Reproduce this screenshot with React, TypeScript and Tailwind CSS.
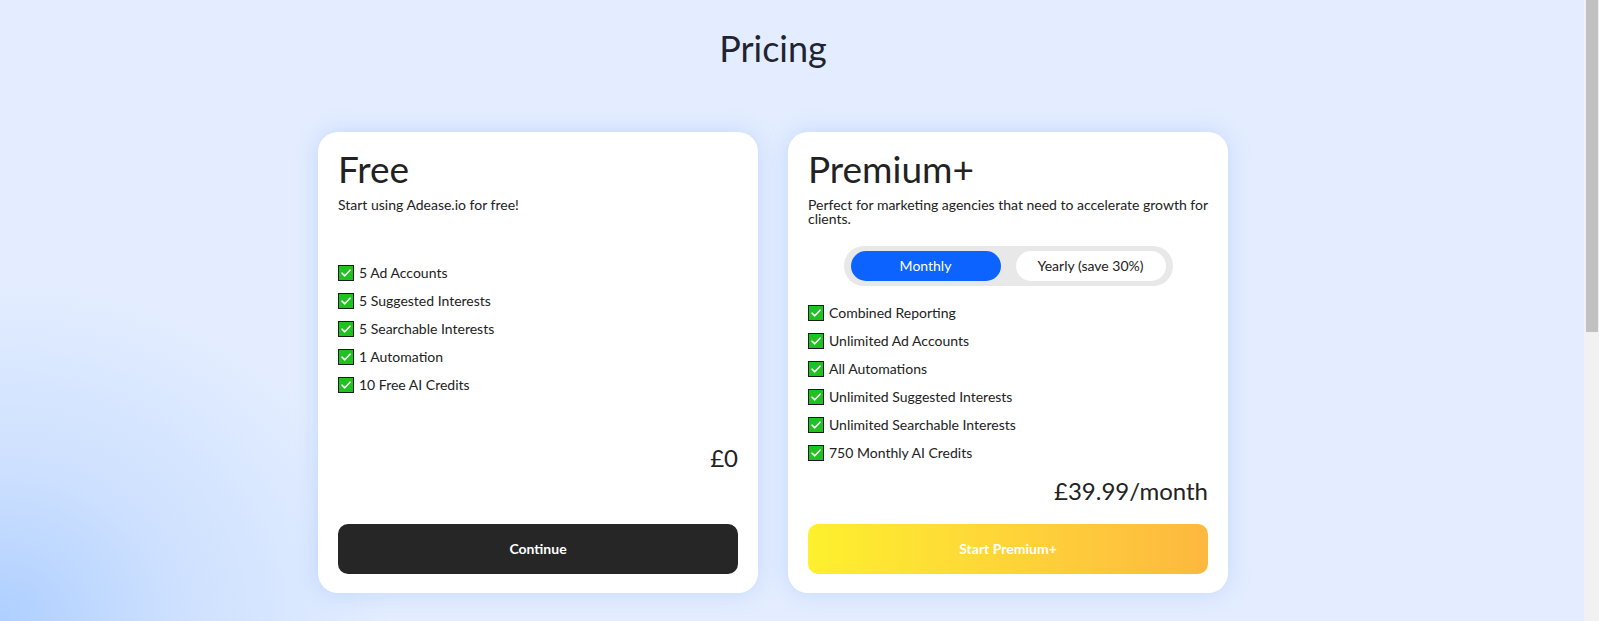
import React, { useState } from "react";

const freeFeatures = [
    "5 Ad Accounts",
    "5 Suggested Interests",
    "5 Searchable Interests",
    "1 Automation",
    "10 Free AI Credits",
];

const premiumFeatures = [
    "Combined Reporting",
    "Unlimited Ad Accounts",
    "All Automations",
    "Unlimited Suggested Interests",
    "Unlimited Searchable Interests",
    "750 Monthly AI Credits",
];

const CheckBox = () => (
    <svg width="16" height="16" viewBox="0 0 16 16" className="shrink-0">
        <rect x="0.5" y="0.5" width="15" height="15" fill="#1fc21f" stroke="#1b1b1b" />
        <path d="M4 8.2 L6.8 10.8 L12 5.2" fill="none" stroke="#ffffff" strokeWidth="1.6" strokeLinecap="round" strokeLinejoin="round" />
    </svg>
);

const FeatureList = ({ items }: { items: string[] }) => (
    <ul className="flex flex-col gap-2">
        {items.map((item) => (
            <li key={item} className="flex items-center gap-[5px] h-5 text-sm text-[#222]">
                <CheckBox />
                <span>{item}</span>
            </li>
        ))}
    </ul>
);

export default function App() {
    const [plan, setPlan] = useState<"monthly" | "yearly">("monthly");

    return (
        <div className="flex h-screen font-['Lato',sans-serif] text-[#222]">
            <div className="flex-1 bg-[#e3edff] bg-[radial-gradient(ellipse_390px_340px_at_0px_621px,#aecfff_0%,#cde0ff_45%,#e3edff_100%)] bg-no-repeat">
                <div className="flex flex-col items-center pr-[38px] pt-[27px]">
                    <h1 className="text-4xl leading-[43px] text-[#1f2430]">Pricing</h1>

                    <div className="mt-[62px] flex gap-[30px] items-stretch">
                        {/* free plan */}
                        <div className="w-[440px] bg-white rounded-[20px] px-5 pt-[17px] pb-[19px] flex flex-col shadow-[0_0_22px_rgba(110,160,255,0.28)]">
                            <h2 className="text-[37px] leading-[40px]">Free</h2>
                            <p className="mt-[9px] text-sm leading-[14px]">Start using Adease.io for free!</p>
                            <div className="mt-[51px]">
                                <FeatureList items={freeFeatures} />
                            </div>
                            <p className="mt-[47px] text-right text-2xl leading-8">£0</p>
                            <button
                                type="button"
                                className="mt-auto h-[50px] w-full rounded-[10px] bg-[#262626] text-white text-sm font-bold"
                            >
                                Continue
                            </button>
                        </div>

                        {/* premium plan */}
                        <div className="w-[440px] bg-white rounded-[20px] px-5 pt-[17px] pb-[19px] flex flex-col shadow-[0_0_22px_rgba(110,160,255,0.28)]">
                            <h2 className="text-[37px] leading-[40px]">Premium+</h2>
                            <p className="mt-[9px] text-sm leading-[14px]">
                                Perfect for marketing agencies that need to accelerate growth for clients.
                            </p>
                            <div className="mt-5 flex justify-center">
                                <div className="flex gap-[15px] rounded-full bg-[#e8e8e8] px-[7px] py-[5px]">
                                    <button
                                        type="button"
                                        onClick={() => setPlan("monthly")}
                                        className={`h-[30px] w-[150px] rounded-full text-sm ${plan === "monthly" ? "bg-[#0d63ff] text-white" : "bg-white text-[#222]"}`}
                                    >
                                        Monthly
                                    </button>
                                    <button
                                        type="button"
                                        onClick={() => setPlan("yearly")}
                                        className={`h-[30px] w-[150px] rounded-full text-sm ${plan === "yearly" ? "bg-[#0d63ff] text-white" : "bg-white text-[#222]"}`}
                                    >
                                        Yearly (save 30%)
                                    </button>
                                </div>
                            </div>
                            <div className="mt-[17px]">
                                <FeatureList items={premiumFeatures} />
                            </div>
                            <p className="mt-3 mb-[17px] text-right text-2xl leading-8">£39.99/month</p>
                            <button
                                type="button"
                                className="mt-auto h-[50px] w-full rounded-[10px] bg-gradient-to-r from-[#fdf02d] to-[#fdb83f] text-white text-sm font-bold"
                            >
                                Start Premium+
                            </button>
                        </div>
                    </div>
                </div>
            </div>

            {/* scrollbar */}
            <div className="w-[15px] shrink-0 bg-[#f1f1f1] pl-[2px] pr-[1px]">
                <div className="h-[332px] bg-[#c1c1c1]" />
            </div>
        </div>
    );
}
